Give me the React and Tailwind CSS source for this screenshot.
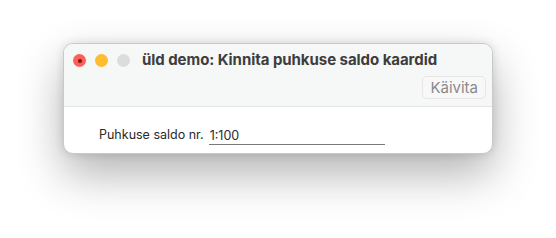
export default function App() {
  return (
    <div className="w-[556px] h-[238px] bg-white pt-[43px] pl-[63px]" style={{ fontFamily: 'Inter, "Liberation Sans", sans-serif' }}>
      <div className="w-[430px] h-[111px] rounded-[10px] border border-[#c9c9c9] bg-white overflow-hidden shadow-[0_20px_45px_rgba(0,0,0,0.3),0_0_10px_rgba(0,0,0,0.12)] flex flex-col">
        {/* Title bar + toolbar */}
        <div className="h-[63px] bg-[#f6f7f7] border-b border-[#e4e4e4] flex flex-col">
          <div className="flex items-center h-[32px] pl-[9px] pt-[1px]">
            <div className="w-[13px] h-[13px] rounded-full bg-[#fe5f57] flex items-center justify-center">
              <div className="w-[4px] h-[4px] rounded-full bg-[#7a1410]" />
            </div>
            <div className="w-[13px] h-[13px] rounded-full bg-[#febc2e] ml-[9px]" />
            <div className="w-[13px] h-[13px] rounded-full bg-[#dcdcdc] ml-[9px]" />
            <div className="ml-[12px] text-[15px] font-bold text-[#3d3d3d] tracking-[-0.05px]">
              üld demo: Kinnita puhkuse saldo kaardid
            </div>
          </div>
          <div className="flex justify-end pr-[6px]">
            <button className="h-[23px] px-[7px] rounded-[5px] border border-[#e6e6e6] bg-[#f8f8f8] text-[15px] text-[#8a8a8a] leading-none">
              Käivita
            </button>
          </div>
        </div>
        {/* Content */}
        <div className="flex items-end pl-[35px] pt-[19px]">
          <span className="text-[12.5px] text-[#2a2a2a] mr-[5px]">Puhkuse saldo nr.</span>
          <div className="w-[176px] border-b border-[#7a7a7a] text-[12.5px] text-[#2a2a2a] pl-[1px] leading-[16px]">1:100</div>
        </div>
      </div>
    </div>
  )
}
